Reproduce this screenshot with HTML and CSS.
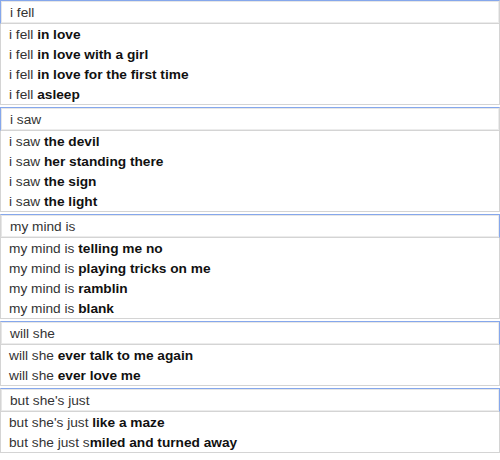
FILE: index.html
```html
<!DOCTYPE html>
<html>
<head>
<meta charset="utf-8">
<link rel="stylesheet" href="styles.css">
</head>
<body>
<div class="page">
  <div class="block">
    <div class="input focus-left">i fell</div>
    <ul class="list">
      <li>i fell <b>in love</b></li>
      <li>i fell <b>in love with a girl</b></li>
      <li>i fell <b>in love for the first time</b></li>
      <li>i fell <b>asleep</b></li>
    </ul>
  </div>
  <div class="block">
    <div class="input focus-left">i saw</div>
    <ul class="list">
      <li>i saw <b>the devil</b></li>
      <li>i saw <b>her standing there</b></li>
      <li>i saw <b>the sign</b></li>
      <li>i saw <b>the light</b></li>
    </ul>
  </div>
  <div class="block">
    <div class="input focus-right">my mind is</div>
    <ul class="list">
      <li>my mind is <b>telling me no</b></li>
      <li>my mind is <b>playing tricks on me</b></li>
      <li>my mind is <b>ramblin</b></li>
      <li>my mind is <b>blank</b></li>
    </ul>
  </div>
  <div class="block">
    <div class="input focus-right">will she</div>
    <ul class="list">
      <li>will she <b>ever talk to me again</b></li>
      <li>will she <b>ever love me</b></li>
    </ul>
  </div>
  <div class="block">
    <div class="input focus-right">but she's just</div>
    <ul class="list">
      <li>but she's just <b>like a maze</b></li>
      <li>but she just s<b>miled and turned away</b></li>
    </ul>
  </div>
</div>
</body>
</html>
```
FILE: styles.css
```css
html, body {
  margin: 0;
  padding: 0;
  background: #fff;
}
.page {
  width: 500px;
  font-family: "Liberation Sans", Arial, sans-serif;
  font-size: 13.7px;
  color: #222;
}
.block {
  margin-bottom: 2px;
}
.input {
  box-sizing: border-box;
  height: 24px;
  line-height: 23px;
  padding-left: 9px;
  border: 1px solid #d4d4d4;
  border-top-color: #85a7ec;
  box-shadow: inset 1px 1px 0 #e6e6e6, inset -1px -1px 0 #ececec;
  color: #333;
}
.focus-left {
  border-left-color: #85a7ec;
}
.focus-right {
  border-right-color: #85a7ec;
}
.list {
  list-style: none;
  margin: 0;
  padding: 0;
  border: 1px solid #d4d4d4;
  border-top: none;
}
.list li {
  height: 20px;
  line-height: 21px;
  padding-left: 8px;
  color: #333;
}
.list b {
  color: #111;
  font-weight: bold;
}
```
